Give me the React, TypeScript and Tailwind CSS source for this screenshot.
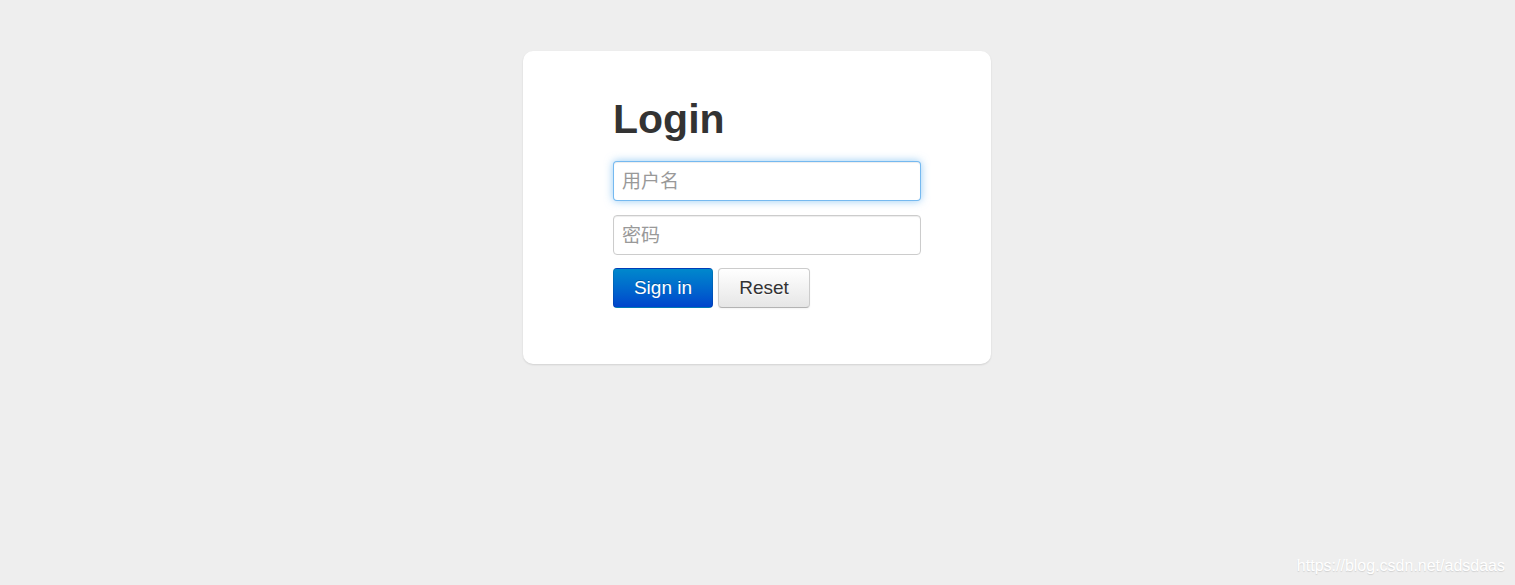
import React from 'react';

const LoginCard: React.FC = () => {
    return (
        <div className="w-[468px] bg-white rounded-[10px] shadow-[0_1px_2px_rgba(0,0,0,0.12)] pt-[46px] pb-[56px] pl-[90px]">
            <h1 className="text-[41px] leading-[44px] font-bold text-[#333333] mb-5">Login</h1>
            <form className="flex flex-col" onSubmit={(e) => e.preventDefault()}>
                <input
                    type="text"
                    autoFocus
                    placeholder="用户名"
                    className="w-[308px] h-10 px-2 pt-[2px] text-[19px] text-[#555555] placeholder:text-[#999999] bg-white rounded-[4px] border border-[rgba(82,168,236,0.8)] shadow-[inset_0_1px_1px_rgba(0,0,0,0.075),0_0_8px_rgba(82,168,236,0.6)] outline-none caret-[#333333]"
                />
                <input
                    type="password"
                    placeholder="密码"
                    className="w-[308px] h-10 mt-[14px] px-2 pt-[2px] text-[19px] text-[#555555] placeholder:text-[#999999] bg-white rounded-[4px] border border-[#cccccc] shadow-[inset_0_1px_1px_rgba(0,0,0,0.075)] outline-none focus:border-[rgba(82,168,236,0.8)]"
                />
                <div className="flex gap-[5px] mt-[13px]">
                    <button
                        type="submit"
                        className="w-[100px] h-10 text-[19px] text-white rounded-[4px] border border-[rgba(0,0,0,0.1)] bg-gradient-to-b from-[#0088cc] to-[#0044cc] [text-shadow:0_-1px_0_rgba(0,0,0,0.25)]"
                    >
                        Sign in
                    </button>
                    <button
                        type="reset"
                        className="w-[92px] h-10 text-[19px] text-[#333333] rounded-[4px] border border-[#cccccc] border-b-[#b3b3b3] bg-gradient-to-b from-white to-[#e6e6e6] shadow-[inset_0_1px_0_rgba(255,255,255,0.2),0_1px_2px_rgba(0,0,0,0.05)] [text-shadow:0_1px_1px_rgba(255,255,255,0.75)]"
                    >
                        Reset
                    </button>
                </div>
            </form>
        </div>
    );
};

const App: React.FC = () => {
    return (
        <div className="relative min-h-screen bg-[#eeeeee] flex items-start justify-center pt-[51px] pr-px font-['Liberation_Sans','Noto_Sans_CJK_SC',sans-serif]">
            <LoginCard />
            <span className="absolute right-[10px] bottom-[9px] text-[16px] leading-5 text-white [text-shadow:0_1px_1px_rgba(0,0,0,0.12)]">
                https://blog.csdn.net/adsdaas
            </span>
        </div>
    );
};

export default App;
